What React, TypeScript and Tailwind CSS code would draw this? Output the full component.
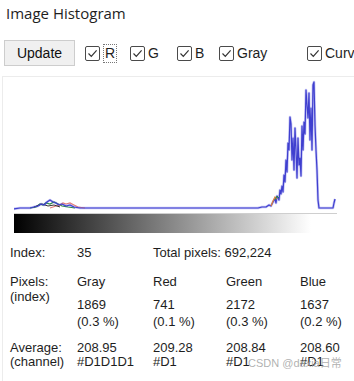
import React from "react";

type Pt = [number, number];

// page coordinates, shifted into the svg box below
const blue: Pt[] = [
  [13, 209], [20, 208], [30, 208], [34, 207], [38, 206], [41, 204], [44, 205], [47, 202],
  [50, 200], [53, 202], [56, 203], [59, 205], [62, 204], [66, 206], [70, 205], [74, 207],
  [80, 208], [90, 208], [258, 208], [262, 207], [266, 207], [269, 205], [271, 206],
  [273, 202], [275, 199], [276, 203], [277, 196], [279, 200], [280, 190], [281, 194],
  [282, 186], [283, 192], [284, 175], [285, 182], [286, 160], [287, 172], [288, 143],
  [289, 150], [290, 117], [291, 124], [292, 160], [293, 138], [294, 170], [295, 128],
  [296, 150], [297, 178], [298, 138], [299, 165], [300, 158], [301, 176], [302, 126],
  [303, 150], [304, 122], [305, 134], [306, 90], [307, 105], [308, 118], [309, 93],
  [310, 140], [311, 108], [312, 150], [313, 85], [314, 82], [315, 125], [316, 150],
  [317, 170], [318, 200], [319, 208], [333, 208], [334, 203], [335, 199],
];
const green: Pt[] = [
  [30, 208], [36, 207], [40, 204], [43, 205], [46, 203], [50, 204], [54, 202], [58, 204],
  [62, 206], [68, 207], [75, 208],
];
const red: Pt[] = [
  [50, 208], [56, 206], [60, 205], [63, 203], [66, 204], [70, 203], [74, 205], [78, 207], [85, 208],
];
const dark: Pt[] = [[34, 207], [42, 204], [48, 206], [54, 205], [60, 207]];
const red2: Pt[] = [[271, 206], [273, 201], [275, 197], [277, 199]];
const green2: Pt[] = [[275, 200], [277, 196], [279, 198]];

const toPts = (p: Pt[]) => p.map(([x, y]) => `${x - 14},${y - 77}`).join(" ");

function Check({ label, focus, w }: { label: string; focus?: boolean; w: string }) {
  return (
    <div className={`flex items-center gap-[3px] shrink-0 ${w}`}>
      <span className="shrink-0 w-[15px] h-[15px] border border-[#4a4a4a] rounded-[2px] flex items-center justify-center bg-white">
        <svg width="11" height="11" viewBox="0 0 11 11">
          <path d="M1.5 5.5 L4.3 8.4 L9.6 2.4" stroke="#333" strokeWidth="1.2" fill="none" />
        </svg>
      </span>
      <span
        className={
          focus
            ? "border border-dotted border-[#777] px-[1px] leading-[17px]"
            : "leading-[17px]"
        }
      >
        {label}
      </span>
    </div>
  );
}

export default function App() {
  return (
    <div
      className="relative w-[354px] h-[381px] overflow-hidden bg-white text-[#1e1e1e]"
      style={{ fontFamily: '"Liberation Sans", Arial, sans-serif' }}
    >
      {/* Title */}
      <div
        className="pl-[6px] pt-[3px] text-[15px] leading-[20px] h-[36px]"
        style={{ fontFamily: '"Open Sans", "Noto Sans", sans-serif' }}
      >
        Image Histogram
      </div>

      {/* Toolbar */}
      <div className="flex items-center h-[34px] text-[14px]">
        <button className="shrink-0 ml-[4px] w-[71px] h-[26px] bg-[#f0f0f0] border border-[#cdcdcd] text-[14px] text-[#111]">
          Update
        </button>
        <div className="flex items-center ml-[10px] shrink-0">
          <Check label="R" focus w="w-[45px]" />
          <Check label="G" w="w-[47px]" />
          <Check label="B" w="w-[42px]" />
          <Check label="Gray" w="w-[88px]" />
          <Check label="Curve" w="w-[60px]" />
        </div>
      </div>

      {/* Histogram panel */}
      <div className="ml-[2px] mt-[6px] w-[360px] h-[306px] border border-[#ececec]">
        <svg width="322" height="134" viewBox="0 0 322 134" className="ml-[11px] block">
          <polyline points={toPts(blue)} fill="none" stroke="#9a9aec" strokeWidth="2.6" strokeLinejoin="round" opacity="0.6" />
          <polyline points={toPts(green)} fill="none" stroke="#2e8b4a" strokeWidth="1.2" />
          <polyline points={toPts(red)} fill="none" stroke="#e07a7a" strokeWidth="1.2" />
          <polyline points={toPts(dark)} fill="none" stroke="#333" strokeWidth="1" />
          <polyline points={toPts(blue)} fill="none" stroke="#3f3fcf" strokeWidth="1.2" strokeLinejoin="round" />
          <polyline points={toPts(red2)} fill="none" stroke="#e0803a" strokeWidth="1.2" />
          <polyline points={toPts(green2)} fill="none" stroke="#2e8b4a" strokeWidth="1" />
        </svg>
        <div className="ml-[11px] mt-[2px] w-[323px] h-[20px] border-t border-[#cfcfcf] bg-[linear-gradient(to_right,#000_0%,#111_6%,#fff_92%)]" />

        {/* Stats */}
        <div className="grid grid-cols-[67px_76px_73px_74px_1fr] pl-[7px] text-[13px] leading-[15px] mt-[12px]">
          <div>Index:</div>
          <div>35</div>
          <div className="col-span-3">Total pixels: 692,224</div>
        </div>

        <div className="grid grid-cols-[67px_76px_73px_74px_1fr] pl-[7px] text-[13px] leading-[15px] mt-[14px]">
          <div>
            <div>Pixels:</div>
            <div>(index)</div>
          </div>
          {[
            ["Gray", "1869", "(0.3 %)"],
            ["Red", "741", "(0.1 %)"],
            ["Green", "2172", "(0.3 %)"],
            ["Blue", "1637", "(0.2 %)"],
          ].map(([h, n, p]) => (
            <div key={h}>
              <div>{h}</div>
              <div className="mt-[7px] leading-[17px]">{n}</div>
              <div className="leading-[17px]">{p}</div>
            </div>
          ))}
        </div>

        <div className="grid grid-cols-[67px_76px_73px_74px_1fr] pl-[7px] text-[13px] leading-[14px] mt-[11px]">
          <div>
            <div>Average:</div>
            <div>(channel)</div>
          </div>
          <div>
            <div>208.95</div>
            <div>#D1D1D1</div>
          </div>
          <div>
            <div>209.28</div>
            <div>#D1</div>
          </div>
          <div>
            <div>208.84</div>
            <div>#D1</div>
          </div>
          <div>
            <div>208.60</div>
            <div>#D1</div>
          </div>
        </div>
      </div>

      {/* watermark */}
      <div
        className="absolute left-[248px] top-[356px] text-[11px] leading-[14px] text-[#a8a8a8]/90"
        style={{ fontFamily: '"Liberation Sans", "Noto Sans CJK SC", sans-serif' }}
      >
        CSDN @daxia日常
      </div>
    </div>
  );
}
